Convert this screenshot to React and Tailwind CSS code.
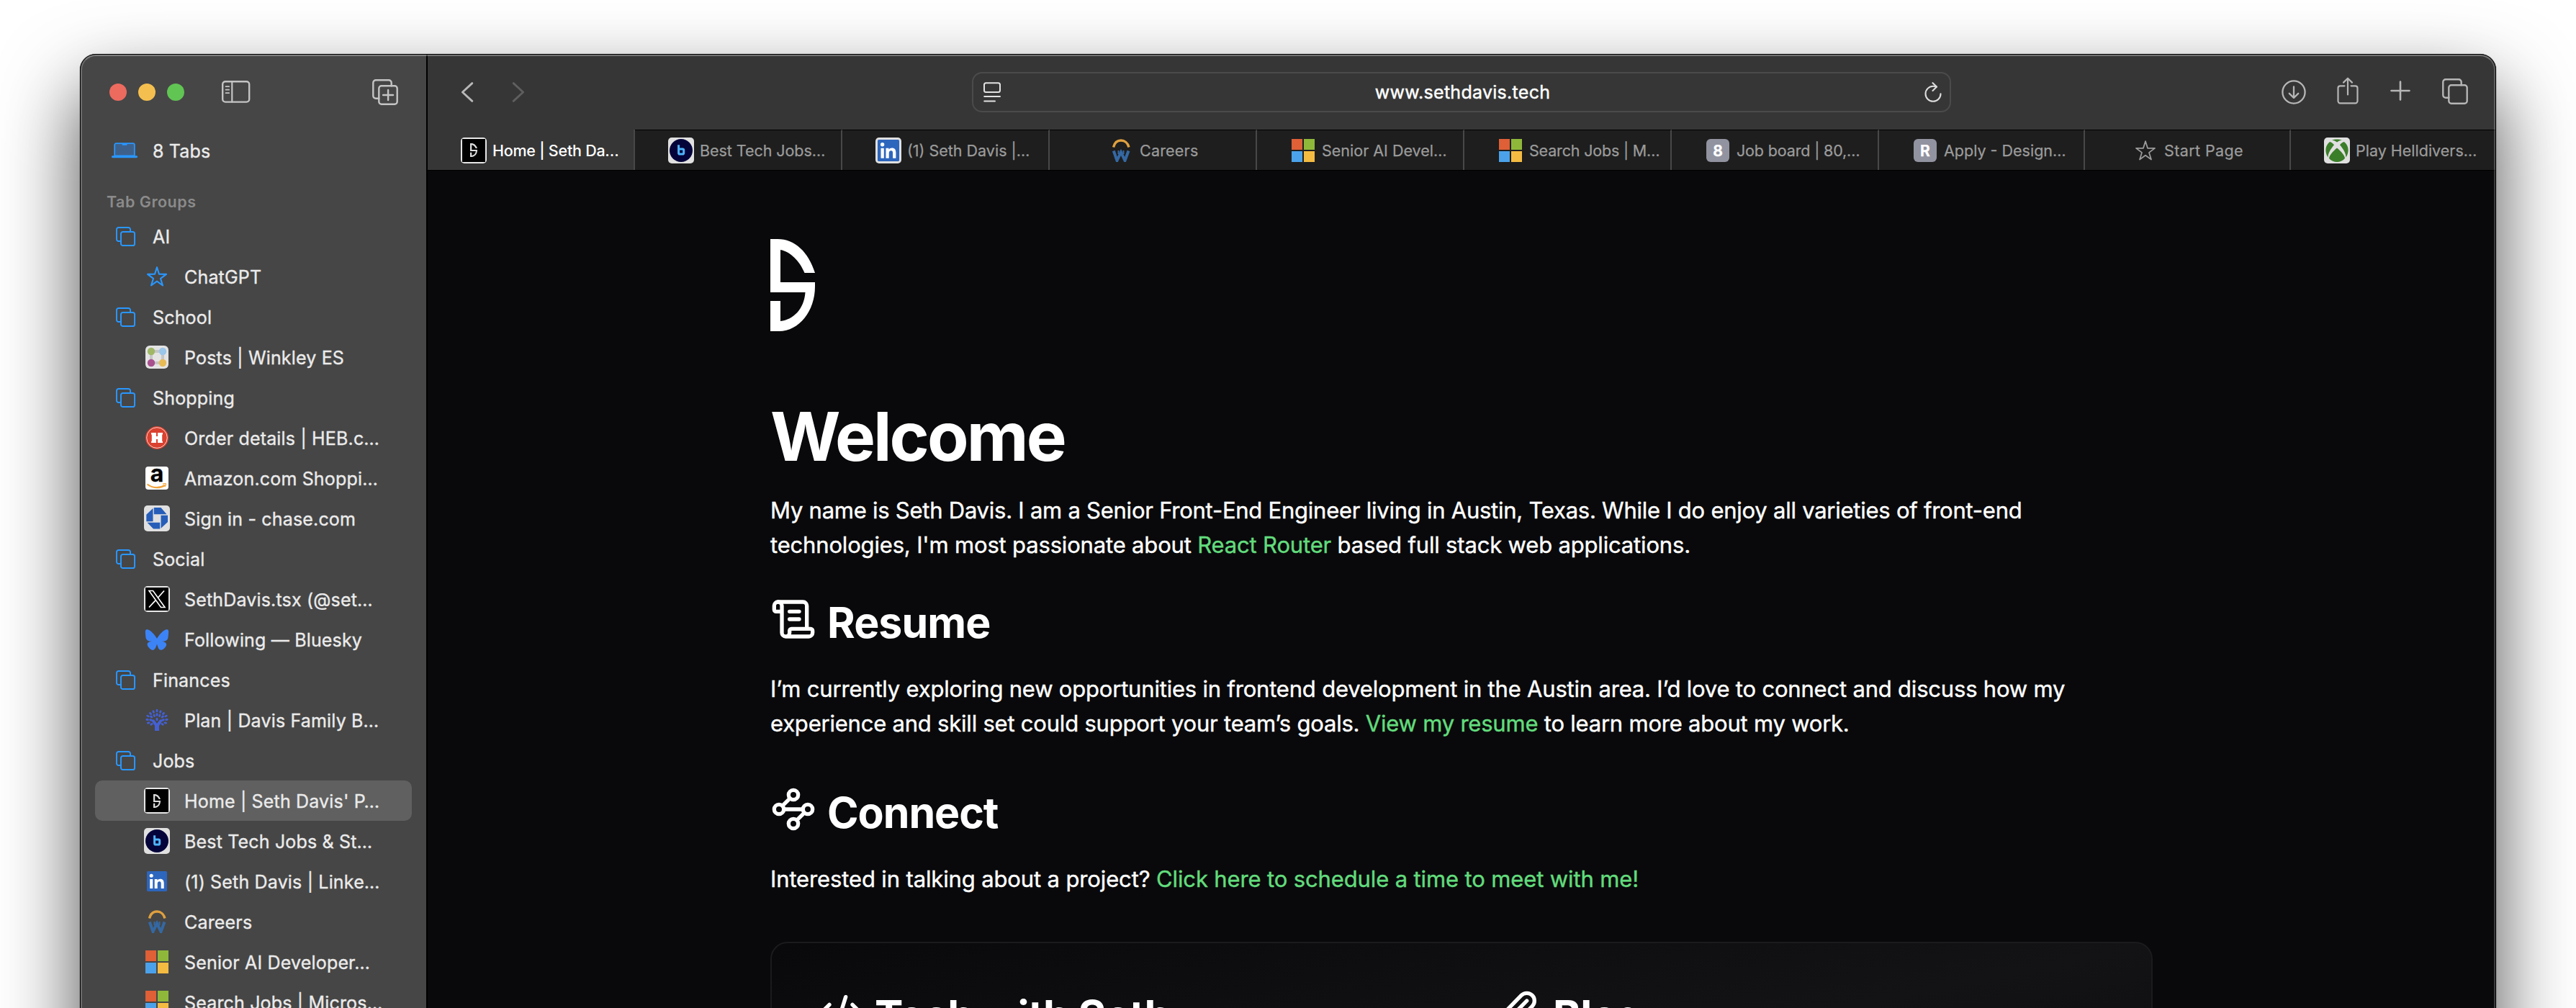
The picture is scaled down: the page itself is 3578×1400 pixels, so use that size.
import React from "react";
import { ScrollText, Waypoints, CodeXml, Paperclip } from "lucide-react";

const LOGO =
  "M0 0H10C34 0 53 18 62 47H47.5C41 31 28 17.5 14 15V60H62V66C62 100 40 128 12 128H0V86H14V114C32 112 47 97 48.5 74H0Z";

function Plate({ children, dark }) {
  return (
    <span className={"flex h-9 w-9 items-center justify-center overflow-hidden rounded-[5px] " + (dark ? "bg-[#e6e6e6]" : "bg-[#e0e0e0]")}>
      {children}
    </span>
  );
}

function SethIcon() {
  return (
    <Plate dark>
      <span className="flex h-8 w-8 items-center justify-center bg-black">
        <svg viewBox="0 0 62 128" className="h-[19px] w-[10px] overflow-visible" preserveAspectRatio="none">
          <path d={LOGO} fill="#dcdcdc" />
        </svg>
      </span>
    </Plate>
  );
}

function BuiltInIcon() {
  return (
    <Plate>
      <svg viewBox="0 0 32 32" className="h-8 w-8">
        <circle cx="16" cy="16" r="16" fill="#04043a" />
        <path d="M12.6 8.2V19.5a1.6 1.6 0 0 0 1.6 1.6h3.9a1.6 1.6 0 0 0 1.6-1.6v-4a1.6 1.6 0 0 0-1.6-1.6H12.6" fill="none" stroke="#4fb3fb" strokeWidth="3" />
      </svg>
    </Plate>
  );
}

function LinkedInMark({ size }) {
  return (
    <svg viewBox="0 0 28 28" className={size}>
      <rect width="28" height="28" rx="1.5" fill="#2d66bd" />
      <rect x="4.2" y="11" width="4" height="13" fill="#fff" />
      <circle cx="6.2" cy="6.3" r="2.5" fill="#fff" />
      <path d="M10.7 11h3.8v1.8c.8-1.3 2.2-2.1 4-2.1 4 0 5.2 2.5 5.2 6.1V24h-4v-6.500c0-1.7-.3-3.3-2.3-3.3s-2.7 1.5-2.7 3.2V24h-4z" fill="#fff" />
    </svg>
  );
}

function CareersIcon() {
  return (
    <svg viewBox="0 0 32 32" className="h-8 w-8">
      <path d="M5.5 11.5C7 5.5 11 2 16 2s9.5 3.5 11 9.5" fill="none" stroke="#dfa03f" strokeWidth="3.4" />
      <path d="M5.8 16.5 10.5 30 16 18.5 21.5 30 26.5 16.5" fill="none" stroke="#3468a2" strokeWidth="4" />
      <path d="M12.5 16v5M19.5 16v5" stroke="#3468a2" strokeWidth="2" />
    </svg>
  );
}

function MicrosoftIcon() {
  return (
    <span className="grid h-8 w-8 grid-cols-2 gap-[2px]">
      <span className="bg-[#df5f36]" />
      <span className="bg-[#8fb83a]" />
      <span className="bg-[#4ba2ea]" />
      <span className="bg-[#f4bb42]" />
    </span>
  );
}

function LetterIcon({ letter }) {
  return (
    <span className="flex h-8 w-8 items-center justify-center rounded-[6px] bg-[#9293a0] pt-[2px] text-[21px] font-bold leading-none text-white">
      {letter}
    </span>
  );
}

function XboxIcon() {
  return (
    <Plate>
      <svg viewBox="0 0 32 32" className="h-8 w-8">
        <path d="M9 1.5C13 0 19 0 23 1.5 20.5 1.8 18 3 16 4.4 14 3 11.5 1.8 9 1.5Z" fill="#3b7e29" />
        <path d="M6 4C8 4 10.5 6.5 12 8.2 7.5 13.5 3.5 20 3.5 25.5-1 18.5-1 9.5 6 4Z" fill="#3b7e29" />
        <path d="M26 4C24 4 21.5 6.5 20 8.2 24.5 13.5 28.5 20 28.5 25.5 33 18.5 33 9.5 26 4Z" fill="#3b7e29" />
        <path d="M16 12.500C21 16.5 27 23 27 27 24 30.5 20 32 16 32S8 30.5 5 27C5 23 11 16.5 16 12.500Z" fill="#3b7e29" />
      </svg>
    </Plate>
  );
}

function Star({ color, sw }) {
  return (
    <svg viewBox="0 0 32 32" className="h-8 w-8" fill="none" stroke={color} strokeWidth={sw} strokeLinejoin="round">
      <path d="M16 3.2 19 12.8 29 12.9 21 18.9 24 28.5 16 22.7 8 28.5 11 18.9 3 12.9 13 12.8Z" />
    </svg>
  );
}

function WinkleyIcon() {
  return (
    <svg viewBox="0 0 32 32" className="h-8 w-8">
      <rect width="32" height="32" rx="6" fill="#e4e4e4" />
      <rect x="8" y="8" width="16" height="16" rx="2" fill="none" stroke="#c6c6c6" strokeWidth="4" />
      <circle cx="8" cy="8" r="5.2" fill="#9fb767" />
      <circle cx="24" cy="8" r="5.2" fill="#9cc6ea" />
      <circle cx="8" cy="24" r="5.2" fill="#a9508f" />
      <circle cx="24" cy="24" r="5.2" fill="#e9bb57" />
    </svg>
  );
}

function HebIcon() {
  return (
    <svg viewBox="0 0 32 32" className="h-8 w-8">
      <circle cx="16" cy="16" r="16" fill="#da412f" />
      <circle cx="16" cy="16" r="14.3" fill="none" stroke="#f3cfca" strokeWidth="1" />
      <path d="M8 9h7v5h2V9h7v2l-.8 1v8.500l.8 1V23h-7v-5h-2v5H8v-1.500l.8-1V12L8 11z" fill="#fff" />
    </svg>
  );
}

function AmazonIcon() {
  return (
    <span className="relative flex h-8 w-8 items-start justify-center rounded-[4px] bg-white">
      <span className="-mt-[6px] text-[32px] font-bold leading-[32px] text-black">a</span>
      <svg viewBox="0 0 32 32" className="absolute inset-0 h-8 w-8" fill="none" stroke="#f2a33a">
        <path d="M2.5 24.5C10 30.5 20 30.5 27 26" strokeWidth="2.2" />
        <path d="M24 24.2c2-.8 4.500-.8 4.500 0s-.6 2.6-1.6 3.8" strokeWidth="1.3" />
      </svg>
    </span>
  );
}

function ChaseIcon() {
  return (
    <Plate>
      <svg viewBox="0 0 30 30" className="h-[30px] w-[30px]" fill="#265db8">
        <path d="M10.8 0H20.5L28.5 9.3H10.8Z" />
        <path d="M30 10.8V20L20.5 28.8V10.8Z" />
        <path d="M19.2 29.5H10L1.5 20.7H19.2Z" />
        <path d="M.3 19.2V9.8L9.5 1V19.2Z" />
      </svg>
    </Plate>
  );
}

function XIcon() {
  return (
    <Plate dark>
      <svg viewBox="0 0 32 32" className="h-8 w-8">
        <rect width="32" height="32" fill="#000" />
        <path d="M5 4.5h5.500L27 27.5h-5.500Z" fill="none" stroke="#fff" strokeWidth="1.6" />
        <path d="M26 4.5 17.5 14M14 17.8 5 27.5" stroke="#fff" strokeWidth="1.7" />
      </svg>
    </Plate>
  );
}

function BlueskyIcon() {
  return (
    <svg viewBox="0 0 24 24" className="h-[34px] w-[34px]" fill="#3c83f6">
      <path d="M12 10.8c-1.087-2.114-4.046-6.053-6.798-7.995C2.566.944 1.561 1.266.902 1.565.139 1.908 0 3.08 0 3.768c0 .69.378 5.65.624 6.479.815 2.736 3.713 3.66 6.383 3.364.136-.02.275-.039.415-.056-.138.022-.276.04-.415.056-3.912.58-7.387 2.005-2.83 7.078 5.013 5.19 6.87-1.113 7.823-4.308.953 3.195 2.05 9.271 7.733 4.308 4.267-4.308 1.172-6.498-2.74-7.078a8.741 8.741 0 0 1-.415-.056c.14.017.279.036.415.056 2.67.297 5.568-.628 6.383-3.364.246-.828.624-5.79.624-6.478 0-.69-.139-1.861-.902-2.206-.659-.298-1.664-.62-4.3 1.24C16.046 4.748 13.087 8.687 12 10.8Z" transform="translate(.6 1) scale(.95)" />
    </svg>
  );
}

function YnabIcon() {
  const leaves = [
    [16, 3, 0], [16, 8.5, 0], [11.2, 4.5, -25], [20.8, 4.5, 25], [7, 7, -40], [25, 7, 40],
    [12.2, 9.8, -20], [19.8, 9.8, 20], [3.5, 10.5, -60], [28.5, 10.5, 60], [8.2, 11.5, -50], [23.8, 11.5, 50],
    [2.6, 15.5, -85], [29.4, 15.5, 85], [7.5, 16, -70], [24.5, 16, 70], [4.2, 20, -100], [27.8, 20, 100],
    [8.5, 21.8, 60], [23.5, 21.8, -60],
  ];
  return (
    <svg viewBox="0 0 32 32" className="h-8 w-8" fill="#4460d4">
      {leaves.map(([x, y, r], i) => (
        <ellipse key={i} cx={x} cy={y} rx="1.5" ry="2.3" transform={`rotate(${r} ${x} ${y})`} />
      ))}
      <path d="M7.5 15.5h4.500L16 21l4-5.500h4.500L19 24v7h-6v-7Z" />
      <ellipse cx="16" cy="15" rx="1.5" ry="2.3" />
    </svg>
  );
}

function Squares({ className, stroke, sw, plus }) {
  return (
    <svg viewBox="0 0 36 36" className={className} fill="none" stroke={stroke} strokeWidth={sw} strokeLinecap="round">
      <rect x="9.3" y="9.3" width="25.400" height="25.400" rx="3.5" />
      <path d="M9.3 26.7H5a3.700 3.700 0 0 1-3.700-3.700V5A3.700 3.700 0 0 1 5 1.3h18A3.700 3.700 0 0 1 26.7 5v4.3" />
      {plus && <path d="M22.1 15v14M15.1 22h14" />}
    </svg>
  );
}

const groups = [
  ["g", "AI"],
  ["c", "ChatGPT", <Star color="#2997ff" sw={2.1} />],
  ["g", "School"],
  ["c", "Posts | Winkley ES", <WinkleyIcon />],
  ["g", "Shopping"],
  ["c", "Order details | HEB.c…", <HebIcon />],
  ["c", "Amazon.com Shoppi…", <AmazonIcon />],
  ["c", "Sign in - chase.com", <ChaseIcon />],
  ["g", "Social"],
  ["c", "SethDavis.tsx (@set…", <XIcon />],
  ["c", "Following — Bluesky", <BlueskyIcon />],
  ["g", "Finances"],
  ["c", "Plan | Davis Family B…", <YnabIcon />],
  ["g", "Jobs"],
  ["s", "Home | Seth Davis' P…", <SethIcon />],
  ["c", "Best Tech Jobs & St…", <BuiltInIcon />],
  ["c", "(1) Seth Davis | Linke…", <LinkedInMark size="h-7 w-7" />],
  ["c", "Careers", <CareersIcon />],
  ["c", "Senior AI Developer…", <MicrosoftIcon />],
  ["c", "Search Jobs | Micros…", <MicrosoftIcon />],
];

function Sidebar() {
  return (
    <aside className="flex w-[483px] shrink-0 flex-col border-r-2 border-black bg-[#464646] text-[25px] tracking-[0.17px] text-[#ebebeb] [-webkit-text-stroke:0.35px]">
      <div className="flex h-[106px] shrink-0 items-center pl-[41px] pr-[39px]">
        <span className="h-6 w-6 rounded-full bg-[#ed6a5f]" />
        <span className="ml-4 h-6 w-6 rounded-full bg-[#f5bf4f]" />
        <span className="ml-4 h-6 w-6 rounded-full bg-[#61c554]" />
        <svg viewBox="0 0 40 31" className="-mt-[2px] ml-[52px] h-[31px] w-10" fill="none" stroke="#c4c4c4" strokeLinecap="round">
          <rect x="1.2" y="1.2" width="37" height="28.4" rx="3.8" strokeWidth="2.4" />
          <path d="M14.3 1.5V29.5" strokeWidth="2.2" />
          <path d="M5.6 8.2h4.500M5.6 12.7h4.500M5.6 17.2h4.500" strokeWidth="1.8" />
        </svg>
        <Squares className="ml-auto h-9 w-9" stroke="#c4c4c4" sw={2.4} plus />
      </div>
      <div className="flex h-14 shrink-0 items-center pl-[43px]">
        <svg viewBox="0 0 38 22" className="h-[22px] w-[38px]">
          <path d="M5.2 18.5V3.2a2 2 0 0 1 2-2h23.600a2 2 0 0 1 2 2V18.5Z" fill="#3e618c" stroke="#2997ff" strokeWidth="1.8" />
          <path d="M15.5 1h7v1.500a1.200 1.200 0 0 1-1.200 1.200h-4.600a1.200 1.200 0 0 1-1.200-1.200Z" fill="#2997ff" />
          <rect x="1" y="18.2" width="36" height="3" rx="1.4" fill="#2997ff" />
        </svg>
        <span className="ml-[20px] pt-[3px]">8 Tabs</span>
      </div>
      <div className="flex h-[63px] shrink-0 items-center pl-[37px] pt-[24px] text-[21.5px] font-semibold tracking-[0.5px] text-[#8b8b8b] [-webkit-text-stroke:0px]">
        Tab Groups
      </div>
      {groups.map(([kind, label, icon], i) =>
        kind === "g" ? (
          <div key={i} className="ml-[21px] mr-5 flex h-14 shrink-0 items-center pl-[29px]">
            <Squares className="h-[27px] w-[27px]" stroke="#2997ff" sw={2.6} />
            <span className="ml-[24px] pt-[3px]">{label}</span>
          </div>
        ) : (
          <div key={i} className={"ml-[21px] mr-5 flex h-14 shrink-0 items-center rounded-[10px] pl-[68px] " + (kind === "s" ? "bg-[#606060]" : "")}>
            <span className="flex w-9 shrink-0 items-center justify-center">{icon}</span>
            <span className="ml-[20px] whitespace-nowrap pt-[3px]">{label}</span>
          </div>
        )
      )}
    </aside>
  );
}

const tabs = [
  ["Home | Seth Da…", <SethIcon />, "w-[288px] pl-[46px]", "tracking-[-0.25px]"],
  ["Best Tech Jobs…", <BuiltInIcon />, "w-[288px] pl-[46px]", "tracking-[-0.05px]"],
  ["(1) Seth Davis |…", <Plate><LinkedInMark size="h-[30px] w-[30px]" /></Plate>, "w-[288px] pl-[46px]", "tracking-[0px]"],
  ["Careers", <CareersIcon />, "w-[288px] pl-[81px]", "tracking-[0.2px]"],
  ["Senior AI Devel…", <MicrosoftIcon />, "w-[288px] pl-[46px]", "tracking-[0px]"],
  ["Search Jobs | M…", <MicrosoftIcon />, "w-[288px] pl-[46px]", "tracking-[-0.18px]"],
  ["Job board | 80,…", <LetterIcon letter="8" />, "w-[288px] pl-[46px]", "tracking-[-0.15px]"],
  ["Apply - Design…", <LetterIcon letter="R" />, "w-[286px] pl-[46px]", "tracking-[0px]"],
  ["Start Page", <Star color="#9b9b9b" sw={1.8} />, "w-[286px] pl-[66px]", "tracking-[0.4px]"],
  ["Play Helldivers…", <XboxIcon />, "w-[285px] pl-[46px]", "tracking-[0px]"],
];

function Toolbar() {
  return (
    <div className="flex h-[105px] shrink-0 items-center bg-[#363636] pl-[46px] pr-[39px]">
      <svg viewBox="0 0 18 28" className="h-7 w-[18px]" fill="none" stroke="#b8b8b8" strokeWidth="2.8" strokeLinecap="round" strokeLinejoin="round">
        <path d="M15.8 1.6 2.4 14l13.400 12.400" />
      </svg>
      <svg viewBox="0 0 18 28" className="ml-[53px] h-7 w-[18px]" fill="none" stroke="#5f5f5f" strokeWidth="2.8" strokeLinecap="round" strokeLinejoin="round">
        <path d="M2.2 1.6 15.6 14 2.2 26.4" />
      </svg>
      <div className="ml-[621px] flex h-14 w-[1360px] items-center justify-between rounded-[14px] border-2 border-[#4b4b4b] pl-[14px] pr-[11px]">
        <svg viewBox="0 0 24 28" className="h-7 w-6" fill="none" stroke="#e2e2e2" strokeWidth="2" strokeLinecap="round">
          <rect x="1" y="1.3" width="22" height="12.6" rx="2.5" />
          <path d="M1.2 20H23M1.2 26.6H16" />
        </svg>
        <span className="pt-[3px] text-[25px] tracking-[0.28px] text-white [-webkit-text-stroke:0.4px]">www.sethdavis.tech</span>
        <svg viewBox="0 0 24 28" className="h-7 w-6" fill="none" stroke="#dcdcdc" strokeWidth="2.1" strokeLinecap="round" strokeLinejoin="round">
          <path d="M22.5 16.3a10.500 10.500 0 1 1-10.500-10.500c1.8 0 3.4.3 4.8.9" />
          <path d="M11.5 1.2 17 6.5l-5.500 5.400" />
        </svg>
      </div>
      <svg viewBox="0 0 34 34" className="ml-auto h-[34px] w-[34px]" fill="none" stroke="#b6b6b6" strokeWidth="2.3" strokeLinecap="round" strokeLinejoin="round">
        <circle cx="17" cy="17" r="15.6" />
        <path d="M17 9.5v15M10.8 18.8 17 24.8l6.200-6" />
      </svg>
      <svg viewBox="0 0 30 38" className="-mt-[3px] ml-[43px] h-[38px] w-[30px]" fill="none" stroke="#b6b6b6" strokeWidth="2.2" strokeLinecap="round" strokeLinejoin="round">
        <path d="M10.5 12.3H4.500a3 3 0 0 0-3 3v18a3 3 0 0 0 3 3h21a3 3 0 0 0 3-3v-18a3 3 0 0 0-3-3h-6" />
        <path d="M15 24.5V2M9 7.6 15 1.7l6 5.900" />
      </svg>
      <svg viewBox="0 0 28 28" className="-mt-[3px] ml-[44px] h-7 w-7" fill="none" stroke="#b6b6b6" strokeWidth="2.6" strokeLinecap="round">
        <path d="M14 1.5v25M1.5 14h25" />
      </svg>
      <Squares className="-mt-[2px] ml-[44px] h-9 w-9" stroke="#b6b6b6" sw={2.4} />
    </div>
  );
}

function TabBar() {
  return (
    <div className="flex h-[57px] shrink-0 border-b border-black">
      {tabs.map(([label, icon, box, track], i) => (
        <div
          key={i}
          className={
            "flex shrink-0 items-center overflow-hidden whitespace-nowrap text-[21.5px] " + box + " " + track + " " +
            (i === 0
              ? "border-r-2 border-[#484848] bg-[#363636] pt-px font-medium text-white"
              : "border-t border-t-black bg-[#1e1e1e] text-[#9b9b9b] [-webkit-text-stroke:0.25px] " + (i < 9 ? "border-r-2 border-r-[#484848]" : ""))
          }
        >
          <span className="flex w-9 shrink-0 items-center justify-center">{icon}</span>
          <span className="ml-[8px] pt-px">{label}</span>
        </div>
      ))}
    </div>
  );
}

function Heading({ icon: Icon, children, track }) {
  return (
    <h2 className={"flex h-16 items-center text-[59px] font-bold leading-[64px] " + track}>
      <Icon className="-mt-[10px] h-16 w-16 shrink-0" strokeWidth={2} />
      <span className="ml-[15px] whitespace-nowrap">{children}</span>
    </h2>
  );
}

function Page() {
  const link = "text-[#62db7c]";
  return (
    <main className="flex h-[1400px] flex-col bg-[#09090b] pl-[476px] text-white">
      <svg viewBox="0 0 62 128" className="mt-[95px] h-32 w-[62px] shrink-0">
        <path d={LOGO} fill="#fff" />
      </svg>
      <h1 className="mt-[98px] h-24 text-[94px] font-bold leading-[96px] tracking-[-2.9px]">Welcome</h1>
      <div className="mt-[31px] flex flex-col whitespace-nowrap text-[31px] leading-[48px] [-webkit-text-stroke:0.4px]">
        <span className="tracking-[-0.245px]">
          My name is Seth Davis. I am a Senior Front-End Engineer living in Austin, Texas. While I do enjoy all varieties of front-end
        </span>
        <span className="tracking-[-0.17px]">
          technologies, I'm most passionate about <a className={link}>React Router</a> based full stack web applications.
        </span>
      </div>
      <div className="mt-[52px]">
        <Heading icon={ScrollText} track="tracking-[-0.9px]">Resume</Heading>
      </div>
      <div className="mt-[36px] flex flex-col whitespace-nowrap text-[31px] leading-[48px] [-webkit-text-stroke:0.4px]">
        <span className="tracking-[-0.195px]">
          I’m currently exploring new opportunities in frontend development in the Austin area. I’d love to connect and discuss how my
        </span>
        <span className="tracking-[-0.215px]">
          experience and skill set could support your team’s goals. <a className={link}>View my resume</a> to learn more about my work.
        </span>
      </div>
      <div className="mt-[68px]">
        <Heading icon={Waypoints} track="tracking-[-1.05px]">Connect</Heading>
      </div>
      <p className="mt-[36px] whitespace-nowrap text-[31px] leading-[48px] tracking-[-0.13px] [-webkit-text-stroke:0.4px]">
        Interested in talking about a project? <a className={link}>Click here to schedule a time to meet with me!</a>
      </p>
      <section className="mt-[63px] grid h-[400px] w-[1920px] shrink-0 grid-cols-2 gap-24 rounded-[24px] border-2 border-[#1b1b1d] bg-linear-to-br from-[#09090b] via-[#131315] to-[#09090b] px-16 pt-[69px]">
        <Heading icon={CodeXml} track="tracking-[-1.15px]">Tech with Seth</Heading>
        <Heading icon={Paperclip} track="tracking-[-0.9px]">Blog</Heading>
      </section>
    </main>
  );
}

export default function App() {
  return (
    <div className="h-[1400px] w-[3578px] overflow-hidden bg-white pl-[111px] pt-[75px] font-['Inter',sans-serif]">
      <div className="relative h-[1900px] w-[3356px] rounded-[22px] shadow-[0_50px_110px_rgba(0,0,0,0.7),0_0_0_1px_rgba(0,0,0,0.1)]">
        <div className="flex h-full w-full overflow-hidden rounded-[22px] bg-[#09090b]">
          <Sidebar />
          <div className="flex min-w-0 flex-1 flex-col overflow-hidden">
            <Toolbar />
            <TabBar />
            <Page />
          </div>
        </div>
        <div className="pointer-events-none absolute inset-0 rounded-[22px] border border-black">
          <div className="h-full w-full rounded-[21px] border-2 border-white/20 border-t-white/30" />
        </div>
      </div>
    </div>
  );
}
